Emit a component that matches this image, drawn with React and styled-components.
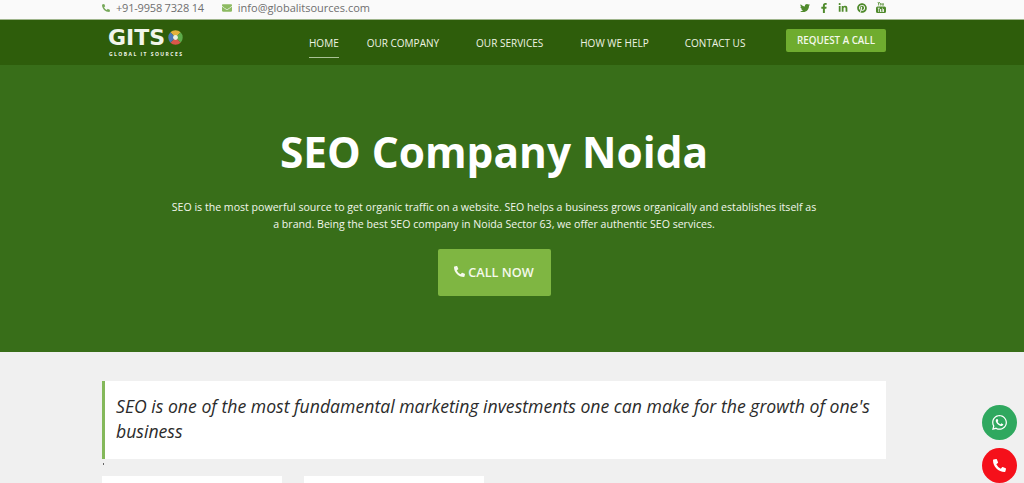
import React from "react";
import styled, { createGlobalStyle } from "styled-components";
import {
  FaPhoneAlt,
  FaEnvelope,
  FaTwitter,
  FaFacebookF,
  FaLinkedinIn,
  FaPinterest,
  FaWhatsapp,
} from "react-icons/fa";

const GlobalStyle = createGlobalStyle`
  html, body {
    margin: 0;
    height: 483px;
    overflow: hidden;
    background: #f0f0f0;
    font-family: "Open Sans", "Liberation Sans", sans-serif;
  }
`;

const navItems = [
  { label: "HOME", gap: 28, active: true },
  { label: "OUR COMPANY", gap: 37 },
  { label: "OUR SERVICES", gap: 37 },
  { label: "HOW WE HELP", gap: 36 },
  { label: "CONTACT US", gap: 0 },
];

function YoutubeIcon() {
  return (
    <svg width="10" height="11" viewBox="0 0 20 22" fill="currentColor">
      <path d="M3 0l1.6 3.4V7h1.6V3.4L8 0H6.3L5.4 2 4.6 0zM9.6 2.2c-1 0-1.6.6-1.6 1.5v2c0 .9.6 1.4 1.6 1.4s1.5-.5 1.5-1.4v-2c0-.9-.5-1.5-1.5-1.5zm-.1 1.2c.2 0 .3.1.3.4v1.9c0 .2-.1.4-.3.4s-.3-.2-.3-.4V3.800c0-.3.1-.4.3-.4zM12.300 2.300v3.800c0 .7.400 1 .9 1 .4 0 .8-.2 1.100-.6V7h1.300V2.300h-1.300v3.500c-.2.200-.3.300-.4.300-.2 0-.3-.100-.3-.300V2.300z" />
      <path d="M3 9h14a3 3 0 0 1 3 3v7a3 3 0 0 1-3 3H3a3 3 0 0 1-3-3v-7a3 3 0 0 1 3-3zm.5 2.500v1.300h1.300V20h1.400v-7.200h1.300v-1.300zm4.600 2.300V19c0 .7.300 1 .8 1 .4 0 .8-.2 1.100-.6v.6h1.100v-6.200H11v4.700c-.2.200-.3.300-.4.300-.2 0-.3-.100-.3-.300v-4.700zm4.700-2.300V20h1.100v-.5c.3.400.6.600 1 .600.6 0 .9-.5.9-1.200v-3.900c0-.8-.3-1.200-.9-1.200-.4 0-.7.200-1 .600v-2.900z" />
    </svg>
  );
}

function App() {
  return (
    <>
      <GlobalStyle />
      <TopBar>
        <Container>
          <ContactList>
            <ContactItem>
              <FaPhoneAlt size={8} color="#76a85a" />
              <PhoneNumber>+91-9958 7328 14</PhoneNumber>
            </ContactItem>
            <ContactItem>
              <FaEnvelope size={10} color="#8dbb62" />
              info@globalitsources.com
            </ContactItem>
          </ContactList>
          <Socials>
            <FaTwitter size={10} />
            <FaFacebookF size={10} />
            <FaLinkedinIn size={10} />
            <FaPinterest size={10} />
            <YoutubeIcon />
          </Socials>
        </Container>
      </TopBar>

      <NavBar>
        <Container>
          <Logo>
            <LogoRow>
              <LogoWord>GITS</LogoWord>
              <svg width="15" height="15" viewBox="0 0 16 16">
                <path d="M8 8 L2.500 2.500 A8 8 0 0 1 13.500 2.500 Z" fill="#e2b13c" />
                <path d="M8 8 L13.500 2.500 A8 8 0 0 1 13.500 13.500 Z" fill="#5dab4a" />
                <path d="M8 8 L13.500 13.500 A8 8 0 0 1 2.500 13.500 Z" fill="#d9574a" />
                <path d="M8 8 L2.500 13.500 A8 8 0 0 1 2.500 2.500 Z" fill="#4a78b8" />
                <circle cx="8" cy="8" r="2.6" fill="#e8efe0" />
              </svg>
            </LogoRow>
            <LogoTag>GLOBAL IT SOURCES</LogoTag>
          </Logo>
          <NavMenu>
            {navItems.map((item) => (
              <NavLink key={item.label} $active={item.active} $gap={item.gap}>
                {item.label}
              </NavLink>
            ))}
          </NavMenu>
          <RequestButton>REQUEST A CALL</RequestButton>
        </Container>
      </NavBar>

      <Hero>
        <HeroTitle>SEO Company Noida</HeroTitle>
        <HeroText>
          SEO is the most powerful source to get organic traffic on a website. SEO helps a business
          grows organically and establishes itself as a brand. Being the best SEO company in Noida
          Sector 63, we offer authentic SEO services.
        </HeroText>
        <CallButton>
          <FaPhoneAlt size={11} />
          CALL NOW
        </CallButton>
      </Hero>

      <Content>
        <Quote>
          SEO is one of the most fundamental marketing investments one can make for the growth of
          one's business
        </Quote>
        <Cards>
          <Card />
          <Card />
        </Cards>
      </Content>

      <FloatButton $bg="#2fa85f" $bottom={43}>
        <FaWhatsapp size={17} />
      </FloatButton>
      <FloatButton $bg="#f5101a" $bottom={0}>
        <FaPhoneAlt size={13} />
      </FloatButton>
    </>
  );
}

export default App;

/* the site is centred on 988px, 36px are left free on the right */
const Container = styled.div`
  width: 784px;
  margin-left: 102px;
  display: flex;
  align-items: center;
  justify-content: space-between;
`;

const TopBar = styled.div`
  height: 20px;
  padding-bottom: 4px;
  background: #fafafa;
  display: flex;
  align-items: center;
  border-bottom: 1px solid #9fb58c;
  box-sizing: border-box;
`;

const ContactList = styled.div`
  display: flex;
  align-items: center;
  gap: 18px;
`;

const ContactItem = styled.div`
  display: flex;
  align-items: center;
  gap: 6px;
  font-size: 11px;
  color: #6f6f6f;
`;

const PhoneNumber = styled.span`
  letter-spacing: -0.2px;
`;

const Socials = styled.div`
  display: flex;
  align-items: center;
  gap: 9px;
  color: #4f8a2c;
`;

const NavBar = styled.div`
  height: 45px;
  background: #2e5d0b;
  display: flex;
  align-items: center;
`;

const Logo = styled.div`
  width: 207px;
  display: flex;
  flex-direction: column;
  color: #f1f5ea;
  margin-top: -2px;
`;

const LogoRow = styled.div`
  display: flex;
  align-items: center;
  gap: 3px;
  margin-left: 6px;
`;

const LogoWord = styled.span`
  font-family: "DejaVu Sans", sans-serif;
  font-size: 22px;
  line-height: 24px;
  font-weight: 700;
`;

const LogoTag = styled.span`
  margin-left: 7px;
  font-size: 5px;
  line-height: 8px;
  font-weight: 700;
  letter-spacing: 1.45px;
  white-space: nowrap;
`;

const NavMenu = styled.nav`
  flex: 1;
  display: flex;
  align-items: flex-start;
  height: 45px;
`;

const NavLink = styled.a`
  margin-right: ${(p) => p.$gap}px;
  height: 38px;
  box-sizing: border-box;
  display: flex;
  align-items: center;
  padding-top: 9px;
  font-size: 10px;
  color: #eef4e4;
  white-space: nowrap;
  border-bottom: 1px solid ${(p) => (p.$active ? "#a9c295" : "transparent")};
`;

const RequestButton = styled.a`
  width: 100px;
  height: 23px;
  margin-top: -5px;
  display: flex;
  align-items: center;
  justify-content: center;
  border-radius: 2px;
  background: #6fac2f;
  color: #f3f8ea;
  font-size: 9.8px;
  font-weight: 600;
`;

const Hero = styled.section`
  height: 287px;
  box-sizing: border-box;
  padding: 57px 36px 0 0;
  background: #386e19;
  display: flex;
  flex-direction: column;
  align-items: center;
  color: #fff;
`;

const HeroTitle = styled.h1`
  margin: 0;
  font-size: 42.4px;
  line-height: 60px;
  font-weight: 700;
`;

const HeroText = styled.p`
  width: 650px;
  margin: 17px 0 0;
  font-size: 10.6px;
  line-height: 17px;
  text-align: center;
  color: #f2f6ec;
`;

const CallButton = styled.a`
  width: 113px;
  height: 47px;
  margin-top: 16px;
  padding-bottom: 2px;
  box-sizing: border-box;
  display: flex;
  align-items: center;
  justify-content: center;
  gap: 3px;
  border-radius: 2px;
  background: #7fb642;
  color: #f5f9ec;
  font-size: 12.7px;
  font-weight: 600;
`;

const Content = styled.section`
  width: 784px;
  margin-left: 102px;
  padding-top: 29px;
`;

const Quote = styled.blockquote`
  position: relative;
  margin: 0;
  height: 78px;
  box-sizing: border-box;
  padding: 13px 12px 0 11px;
  background: #fff;
  border-left: 3px solid #84b85a;
  font-size: 17.65px;
  line-height: 25px;
  font-style: italic;
  color: #2b2b2b;

  &::after {
    content: "";
    position: absolute;
    left: -2px;
    top: 82px;
    width: 1px;
    height: 2px;
    background: #666;
  }
`;

const Cards = styled.div`
  display: flex;
  gap: 22px;
  margin-top: 17px;
`;

const Card = styled.div`
  width: 180px;
  height: 7px;
  background: #fff;
`;

const FloatButton = styled.a`
  position: fixed;
  right: 7px;
  bottom: ${(p) => p.$bottom}px;
  width: 35px;
  height: 35px;
  border-radius: 50%;
  display: flex;
  align-items: center;
  justify-content: center;
  background: ${(p) => p.$bg};
  color: #fff;
`;
